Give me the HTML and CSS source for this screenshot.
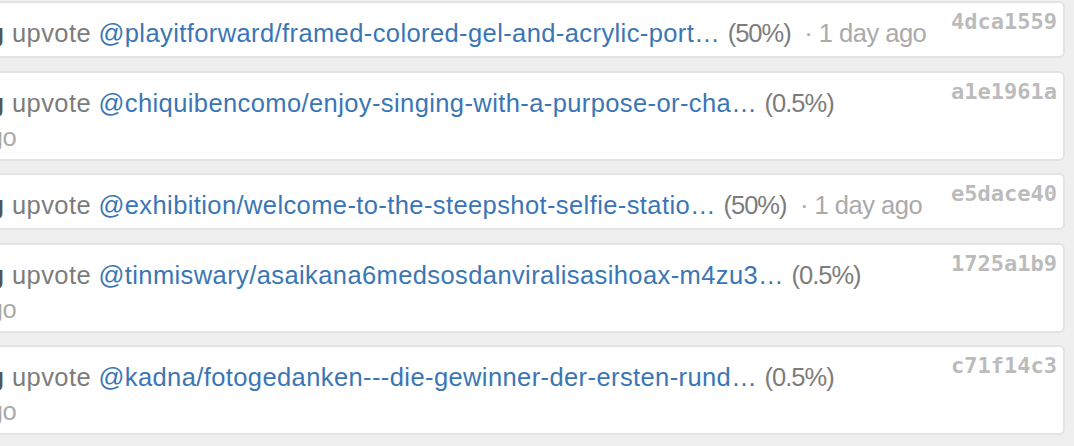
FILE: index.html
```html
<!DOCTYPE html>
<html lang="en">
<head>
    <meta charset="UTF-8">
    <meta name="viewport" content="width=device-width, initial-scale=1.0">
    <title>Operations</title>
    <link rel="stylesheet" href="styles.css">
</head>
<body>

    <div class="feed">
        <div class="op">
            <span class="trx">4dca1559</span>
            <span class="voter">teamblog</span> upvote
            <a href="#" class="post">@playitforward/framed-colored-gel-and-acrylic-port…</a>
            <span class="weight">(50%)</span>
            <span class="time">· 1 day ago</span>
        </div>

        <div class="op">
            <span class="trx">a1e1961a</span>
            <span class="voter">teamblog</span> upvote
            <a href="#" class="post">@chiquibencomo/enjoy-singing-with-a-purpose-or-cha…</a>
            <span class="weight">(0.5%)</span>
            <span class="time">· 1 day ago</span>
        </div>

        <div class="op">
            <span class="trx">e5dace40</span>
            <span class="voter">teamblog</span> upvote
            <a href="#" class="post">@exhibition/welcome-to-the-steepshot-selfie-statio…</a>
            <span class="weight">(50%)</span>
            <span class="time">· 1 day ago</span>
        </div>

        <div class="op">
            <span class="trx">1725a1b9</span>
            <span class="voter">teamblog</span> upvote
            <a href="#" class="post">@tinmiswary/asaikana6medsosdanviralisasihoax-m4zu3…</a>
            <span class="weight">(0.5%)</span>
            <span class="time">· 1 day ago</span>
        </div>

        <div class="op">
            <span class="trx">c71f14c3</span>
            <span class="voter">teamblog</span> upvote
            <a href="#" class="post">@kadna/fotogedanken---die-gewinner-der-ersten-rund…</a>
            <span class="weight">(0.5%)</span>
            <span class="time">· 1 day ago</span>
        </div>
    </div>

</body>
</html>
```

FILE: styles.css
```css
/* Reset */
* {
    margin: 0;
    padding: 0;
    box-sizing: border-box;
}

body {
    font-family: "Liberation Sans", Arial, sans-serif;
    background-color: #efefef;
    color: #777;
    overflow: hidden;
}

/* the list is wider than the window, its left side runs off screen */
.feed {
    margin: 0 9px 0 -126px;
    padding-top: 1px;
}

.op {
    background-color: #fff;
    border: 2px solid #e3e3e3;
    border-radius: 6px;
    padding: 12px 12px 5px 12px;
    margin-bottom: 12.5px;
    font-size: 25.5px;
    line-height: 33px;
    letter-spacing: 0.4px;
    color: #7c7c7c;
}

/* the name line sits a bit taller than the wrapped line */
.voter {
    display: inline-block;
    line-height: 36px;
    font-weight: bold;
    color: #555;
}

.post {
    color: #3a76b5;
    text-decoration: none;
}

.weight {
    color: #7c7c7c;
    letter-spacing: -1px;
}

.time {
    color: #aaa;
    margin-left: 6px;
    letter-spacing: -0.5px;
    white-space: nowrap;
}

.trx {
    float: right;
    font-family: "DejaVu Sans Mono", "Liberation Mono", monospace;
    font-weight: bold;
    font-size: 22px;
    line-height: 24px;
    letter-spacing: 0;
    color: #bbb;
    margin: -5px -6px 0 0;
}
```
